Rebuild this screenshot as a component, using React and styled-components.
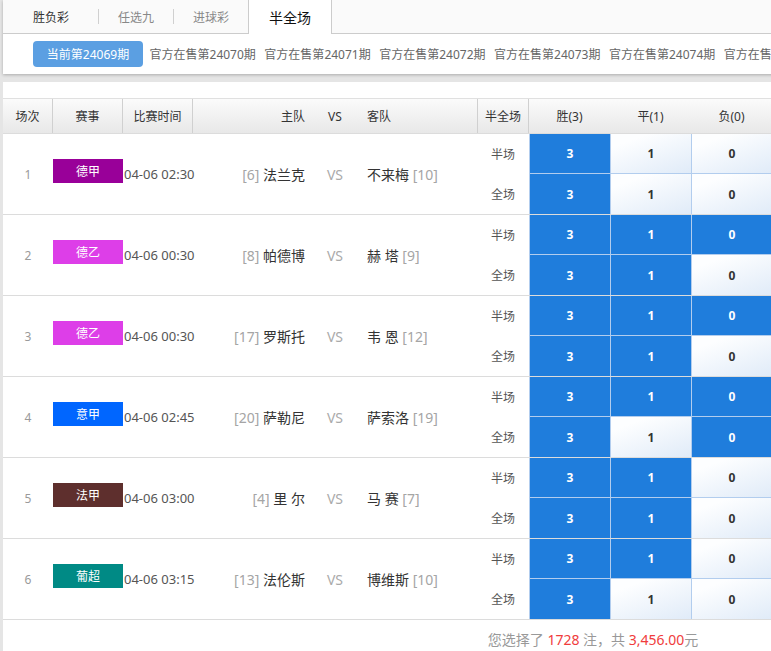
import styled, { createGlobalStyle } from "styled-components";

const GlobalStyle = createGlobalStyle`
  html, body {
    margin: 0;
    padding: 0;
    overflow: hidden;
    background: #e5e5e5;
  }
  body {
    font-family: "Noto Sans", "Noto Sans CJK SC", sans-serif;
    color: #333;
  }
`;

const COLUMNS = "50px 70px 70px 125px 34px 126px 51px 81px 81px 81px 1fr";

const matches = [
  { no: 1, league: "德甲", color: "#990099", time: "04-06 02:30", homeRank: 6, home: "法兰克", away: "不来梅", awayRank: 10, half: [1, 0, 0], full: [1, 0, 0] },
  { no: 2, league: "德乙", color: "#dd3ee8", time: "04-06 00:30", homeRank: 8, home: "帕德博", away: "赫 塔", awayRank: 9, half: [1, 1, 1], full: [1, 1, 0] },
  { no: 3, league: "德乙", color: "#dd3ee8", time: "04-06 00:30", homeRank: 17, home: "罗斯托", away: "韦 恩", awayRank: 12, half: [1, 1, 1], full: [1, 1, 0] },
  { no: 4, league: "意甲", color: "#0066ff", time: "04-06 02:45", homeRank: 20, home: "萨勒尼", away: "萨索洛", awayRank: 19, half: [1, 1, 1], full: [1, 0, 1] },
  { no: 5, league: "法甲", color: "#5e2f2d", time: "04-06 03:00", homeRank: 4, home: "里 尔", away: "马 赛", awayRank: 7, half: [1, 1, 0], full: [1, 1, 0] },
  { no: 6, league: "葡超", color: "#008a85", time: "04-06 03:15", homeRank: 13, home: "法伦斯", away: "博维斯", awayRank: 10, half: [1, 1, 0], full: [1, 0, 0] },
];

const tabs = ["胜负彩", "任选九", "进球彩", "半全场"];
const periods = ["24070", "24071", "24072", "24073", "24074", "24075"];
const odds = ["3", "1", "0"];

const Page = styled.div`
  width: 1180px;
  margin-left: 3px;
`;

const TopPanel = styled.div`
  background: #fff;
  box-shadow: 0 1px 3px rgba(0, 0, 0, 0.25);
  margin-bottom: 8px;
`;

const TabBar = styled.div`
  display: flex;
  align-items: center;
  height: 33px;
  background: #fafafa;
  border-bottom: 1px solid #cccccc;
`;

const Tab = styled.div`
  display: flex;
  align-items: center;
  justify-content: center;
  box-sizing: border-box;
  height: ${(p) => (p.$active ? "34px" : "33px")};
  padding: ${(p) => (p.$first ? "0 29px 0 30px" : p.$active ? "0 20px" : "0 19px")};
  font-size: ${(p) => (p.$active ? "14px" : "12px")};
  color: ${(p) => (p.$active ? "#111" : p.$first ? "#333" : "#888")};
  background: ${(p) => (p.$active ? "#fff" : "transparent")};
  border-left: ${(p) => (p.$active ? "1px solid #ccc" : "none")};
  border-right: ${(p) => (p.$active ? "1px solid #ccc" : "none")};
  align-self: flex-start;
`;

const TabDivider = styled.span`
  width: 1px;
  height: 15px;
  background: #d0d0d0;
`;

const PeriodRow = styled.div`
  display: flex;
  align-items: center;
  height: 40px;
  padding-left: 30px;
  gap: 8.5px;
  white-space: nowrap;
`;

const CurrentPeriod = styled.div`
  display: flex;
  align-items: center;
  justify-content: center;
  width: 110px;
  height: 26px;
  border-radius: 4px;
  background: #5b9fe2;
  color: #fff;
  font-size: 12px;
  margin-right: -2px;
`;

const Period = styled.span`
  font-size: 12px;
  color: #666;
`;

const TablePanel = styled.div`
  background: #fff;
  padding-top: 16px;
`;

const HeaderRow = styled.div`
  display: grid;
  grid-template-columns: ${COLUMNS};
  height: 34px;
  border-top: 1px solid #e0e0e0;
  border-bottom: 1px solid #dcdcdc;
  background: linear-gradient(to bottom, #fbfbfb, #e8e8e8);
`;

const HeadCell = styled.div`
  display: flex;
  align-items: center;
  justify-content: ${(p) => p.$align || "center"};
  padding: ${(p) => p.$pad || "0"};
  font-size: 12px;
  color: #333;
  border-right: ${(p) => (p.$line ? "1px solid #d0d0d0" : "none")};
`;

const MatchRow = styled.div`
  display: grid;
  grid-template-columns: ${COLUMNS};
  grid-template-rows: 40px 40px;
  border-bottom: 1px solid #dcdcdc;
`;

const InfoCell = styled.div`
  grid-row: span 2;
  display: flex;
  align-items: center;
  justify-content: ${(p) => p.$align || "flex-start"};
  padding: ${(p) => p.$pad || "0"};
  white-space: nowrap;
`;

const No = styled.span`
  font-size: 12px;
  color: #9a9a9a;
`;

const League = styled.span`
  display: flex;
  align-items: center;
  justify-content: center;
  width: 70px;
  height: 24px;
  margin-bottom: 6px;
  background: ${(p) => p.$color};
  color: #fff;
  font-size: 12px;
`;

const Time = styled.span`
  font-size: 13px;
  color: #555;
  margin-left: 1px;
`;

const Team = styled.span`
  font-size: 14px;
  color: #333;
  margin-top: -1px;
`;

const Rank = styled.span`
  color: #a5a5a5;
`;

const Vs = styled.span`
  font-size: 14px;
  color: #aaa;
`;

const HalfLabel = styled.div`
  display: flex;
  align-items: center;
  justify-content: flex-end;
  padding-right: 14px;
  font-size: 12px;
  color: #555;
`;

const Odd = styled.div`
  display: flex;
  align-items: center;
  justify-content: center;
  font-size: 12px;
  font-weight: bold;
  border-left: 1px solid #b2cdee;
  border-bottom: ${(p) => (p.$top ? "1px solid #b2cdee" : "none")};
  color: ${(p) => (p.$on ? "#fff" : "#333")};
  background: ${(p) =>
    p.$on ? "#1f7ddc" : "linear-gradient(160deg, #fdfeff 20%, #e0ebf8)"};
`;

const Footer = styled.div`
  height: 40px;
  line-height: 40px;
  text-align: center;
  font-size: 14px;
  color: #999;
  background: #fff;
`;

const Red = styled.span`
  color: #f03c3c;
`;

function OddsLine({ label, picks, top }) {
  return (
    <>
      <HalfLabel>{label}</HalfLabel>
      {odds.map((o, i) => (
        <Odd key={o} $on={picks[i] === 1} $top={top}>
          {o}
        </Odd>
      ))}
      <div />
    </>
  );
}

export default function App() {
  return (
    <>
      <GlobalStyle />
      <Page>
        <TopPanel>
          <TabBar>
            <Tab $first>{tabs[0]}</Tab>
            <TabDivider />
            <Tab>{tabs[1]}</Tab>
            <TabDivider />
            <Tab>{tabs[2]}</Tab>
            <Tab $active>{tabs[3]}</Tab>
          </TabBar>
          <PeriodRow>
            <CurrentPeriod>当前第24069期</CurrentPeriod>
            {periods.map((p) => (
              <Period key={p}>官方在售第{p}期</Period>
            ))}
          </PeriodRow>
        </TopPanel>

        <TablePanel>
          <HeaderRow>
            <HeadCell $line>场次</HeadCell>
            <HeadCell $line>赛事</HeadCell>
            <HeadCell $line>比赛时间</HeadCell>
            <HeadCell $align="flex-end" $pad="0 13px 0 0">主队</HeadCell>
            <HeadCell>VS</HeadCell>
            <HeadCell $align="flex-start" $pad="0 0 0 15px" $line>客队</HeadCell>
            <HeadCell $line>半全场</HeadCell>
            <HeadCell>胜(3)</HeadCell>
            <HeadCell>平(1)</HeadCell>
            <HeadCell>负(0)</HeadCell>
            <HeadCell />
          </HeaderRow>

          {matches.map((m) => (
            <MatchRow key={m.no}>
              <InfoCell $align="center">
                <No>{m.no}</No>
              </InfoCell>
              <InfoCell>
                <League $color={m.color}>{m.league}</League>
              </InfoCell>
              <InfoCell>
                <Time>{m.time}</Time>
              </InfoCell>
              <InfoCell $align="flex-end" $pad="0 13px 0 0">
                <Team>
                  <Rank>[{m.homeRank}]</Rank> {m.home}
                </Team>
              </InfoCell>
              <InfoCell $align="center">
                <Vs>VS</Vs>
              </InfoCell>
              <InfoCell $pad="0 0 0 15px">
                <Team>
                  {m.away} <Rank>[{m.awayRank}]</Rank>
                </Team>
              </InfoCell>
              <OddsLine label="半场" picks={m.half} top />
              <OddsLine label="全场" picks={m.full} />
            </MatchRow>
          ))}

          <Footer>
            您选择了 <Red>1728</Red> 注，共 <Red>3,456.00</Red>元
          </Footer>
        </TablePanel>
      </Page>
    </>
  );
}
